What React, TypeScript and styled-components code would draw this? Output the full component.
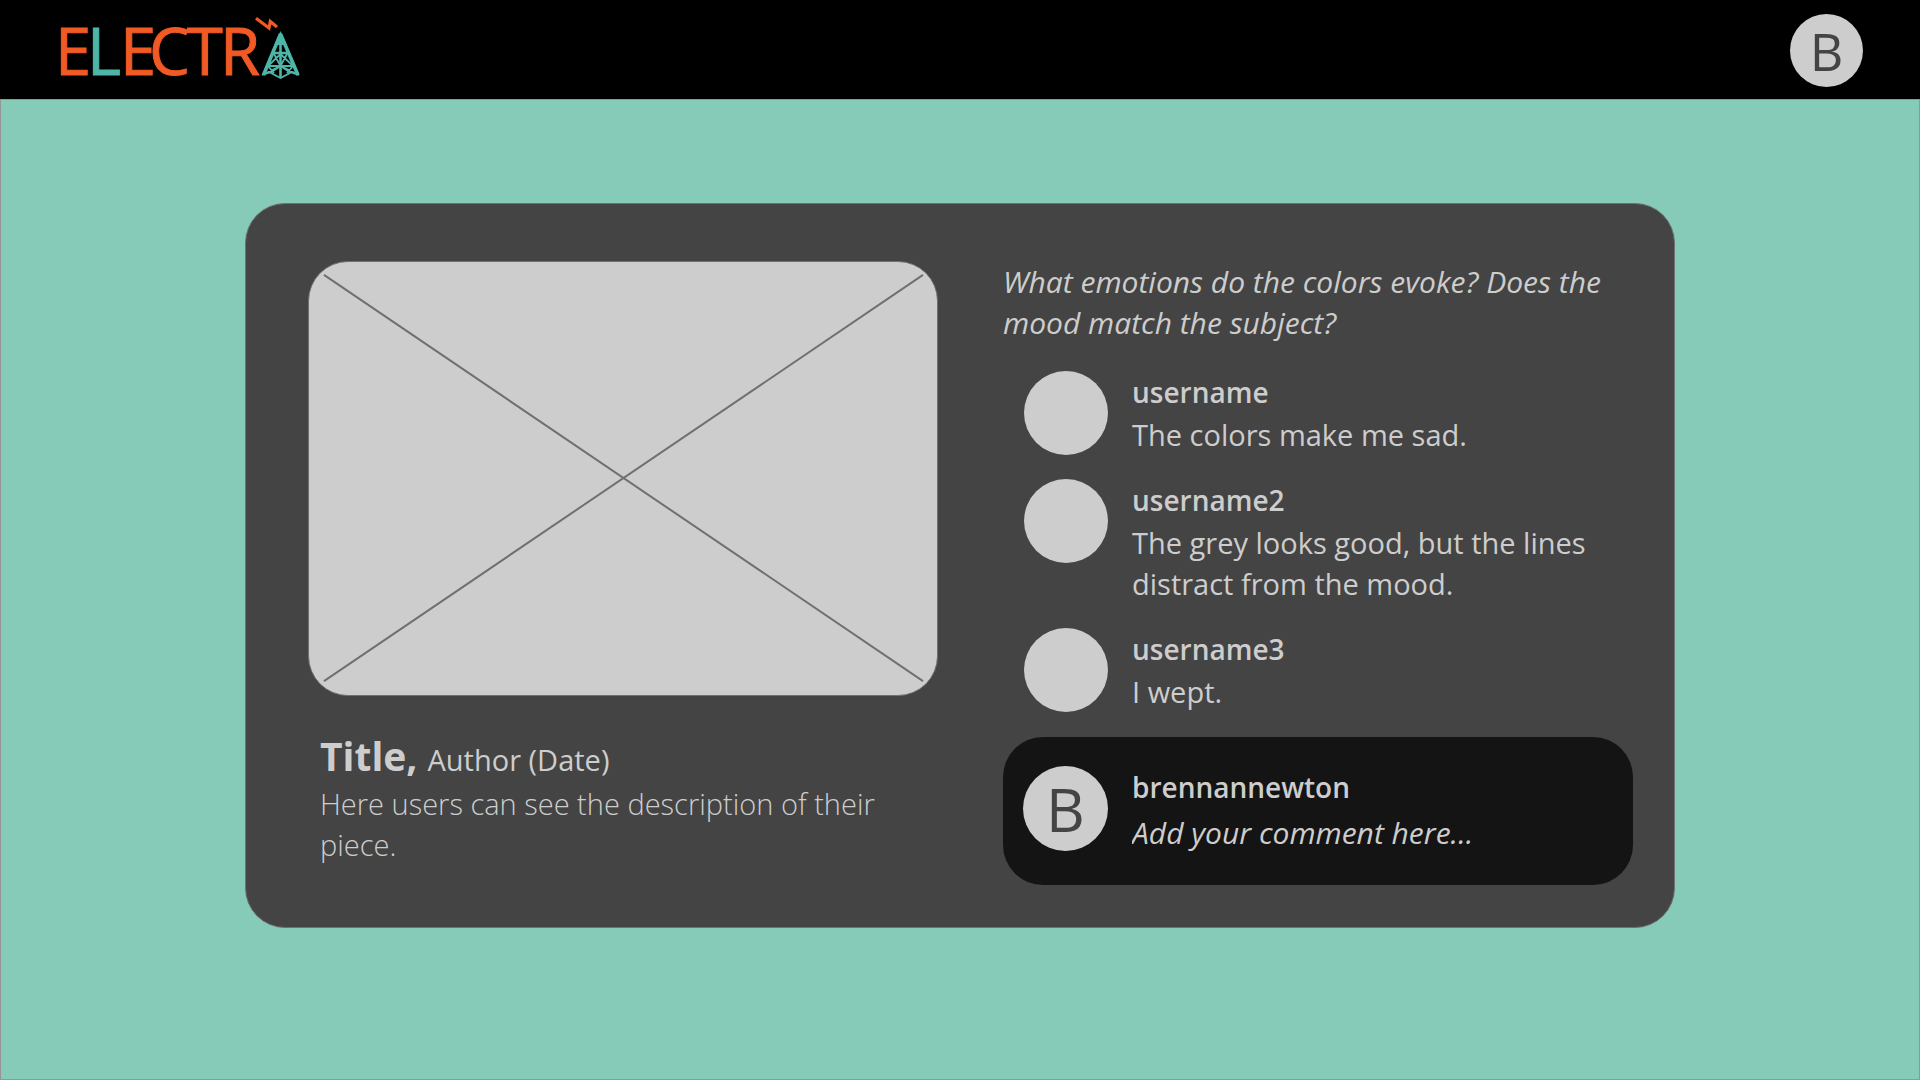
import React from "react";
import styled, { createGlobalStyle } from "styled-components";

const color = {
  mint: "#86cbb8",
  panel: "#444444",
  light: "#cdcdcd",
  line: "#707070",
  ink: "#141414",
  orange: "#f15a24",
  teal: "#4db6a8",
};

const GlobalStyle = createGlobalStyle`
  *, *::before, *::after { box-sizing: border-box; }
  body {
    margin: 0;
    background: ${color.mint};
    color: ${color.light};
    font-family: "Open Sans", "Noto Sans", sans-serif;
    font-size: 29px;
    line-height: 41px;
  }
  h1, h2, p, ul { margin: 0; padding: 0; }
`;

const Page = styled.div`
  min-height: 100vh;
  display: flex;
  flex-direction: column;
`;

const Header = styled.header`
  height: 99px;
  flex: none;
  display: flex;
  align-items: center;
  justify-content: space-between;
  padding: 2px 57px 0 48px;
  background: #000;
`;

const HomeLink = styled.a`
  display: block;
  svg { display: block; overflow: visible; }
`;

const LogoText = styled.text`
  font-family: "Open Sans", "Noto Sans", sans-serif;
  font-size: 65px;
  fill: ${color.orange};
  stroke: ${color.orange};
  stroke-width: 1px;
`;

const LogoAccent = styled.tspan`
  fill: ${color.teal};
  stroke: ${color.teal};
`;

const Avatar = styled.span<{ $size: number; $font?: number }>`
  flex: none;
  display: flex;
  align-items: center;
  justify-content: center;
  width: ${(p) => p.$size}px;
  height: ${(p) => p.$size}px;
  border-radius: 50%;
  background: ${color.light};
  color: ${color.panel};
  font-size: ${(p) => p.$font ?? 52}px;
  line-height: 1;
`;

const AccountButton = styled.button`
  padding: 0;
  border: 0;
  border-radius: 50%;
  background: none;
  font: inherit;
  cursor: pointer;
`;

const Main = styled.main`
  flex: 1;
  padding: 103px 244px;
  border: 1px solid #959595;
`;

const Card = styled.article`
  display: grid;
  grid-template-columns: minmax(0, 1fr) minmax(0, 1fr);
  column-gap: 65px;
  padding: 57px 41px 42px 62px;
  border: 1px solid ${color.line};
  border-radius: 40px;
  background: ${color.panel};
`;

const Artwork = styled.div`
  aspect-ratio: 630 / 435;
  overflow: hidden;
  border: 1px solid ${color.line};
  border-radius: 40px;
  background: ${color.light};
  svg { display: block; width: 100%; height: 100%; }
`;

const Caption = styled.div`
  padding: 37px 12px 0;
`;

const Heading = styled.div`
  display: flex;
  align-items: baseline;
  gap: 10px;
  line-height: 46px;
`;

const Title = styled.h1`
  font-size: 39px;
  font-weight: 700;
`;

const Description = styled.p`
  font-weight: 300;
`;

const Question = styled.h2`
  font-size: 30px;
  font-weight: 400;
  font-style: italic;
`;

const Comments = styled.ul`
  display: flex;
  flex-direction: column;
  gap: 24px;
  margin: 28px 0 25px;
  list-style: none;
`;

const Comment = styled.li`
  display: flex;
  gap: 24px;
  padding: 0 21px;
`;

const UserName = styled.div`
  font-size: 28px;
  font-weight: 600;
  line-height: 43px;
`;

const Composer = styled.form`
  display: flex;
  gap: 24px;
  height: 148px;
  padding: 29px 20px 0;
  border-radius: 40px;
  background: ${color.ink};
`;

const Field = styled.div`
  flex: 1;
  min-width: 0;
`;

const CommentInput = styled.input`
  display: block;
  width: 100%;
  height: 46px;
  padding: 0;
  border: 0;
  outline: 0;
  background: none;
  color: ${color.light};
  font: inherit;
  font-size: 30px;
  font-style: italic;
  &::placeholder { color: inherit; opacity: 1; }
`;

const comments = [
  { user: "username", text: "The colors make me sad." },
  { user: "username2", text: "The grey looks good, but the lines distract from the mood." },
  { user: "username3", text: "I wept." },
];

function Logo() {
  return (
    <svg width="256" height="96" viewBox="48 3 256 96" role="img" aria-label="Electra">
      <LogoText x="55 87 120 149 187 220" y="75">
        E<LogoAccent>L</LogoAccent>ECTR
      </LogoText>
      <path d="M256 18.300L269 28L270.300 21.500L277 27" fill="none" stroke={color.orange} strokeWidth="3.200" />
      <path d="M280.500 31L286.500 45H274.500Z" fill={color.teal} />
      <g fill="none" stroke={color.teal}>
        <path d="M280.500 34L263.500 75M280.500 34L298 75" strokeWidth="3.600" />
        <path d="M280.500 40V78M273 53H288" strokeWidth="2.600" />
        <path
          d="M268 66H293M274 54L280.500 66L262 75M287 54L280.500 66L299 75M280.500 54L268 66L274 73M280.500 54L293 66L287 73M262 75L270 72.500L280.500 78L291 72.500L299 75M280.500 66L270 73M280.500 66L291 73"
          strokeWidth="1.800"
        />
      </g>
    </svg>
  );
}

export default function App() {
  return (
    <Page>
      <GlobalStyle />
      <Header>
        <HomeLink href="#" aria-label="Electra">
          <Logo />
        </HomeLink>
        <AccountButton type="button" aria-label="Account">
          <Avatar $size={73}>B</Avatar>
        </AccountButton>
      </Header>
      <Main>
        <Card>
          <section>
            <Artwork>
              <svg viewBox="0 0 629 435" preserveAspectRatio="none" aria-hidden="true">
                <path d="M15 13L615 421M615 13L15 421" stroke={color.line} strokeWidth="2" />
              </svg>
            </Artwork>
            <Caption>
              <Heading>
                <Title>Title,</Title>
                <span>Author (Date)</span>
              </Heading>
              <Description>Here users can see the description of their piece.</Description>
            </Caption>
          </section>
          <section>
            <Question>What emotions do the colors evoke? Does the mood match the subject?</Question>
            <Comments>
              {comments.map((c) => (
                <Comment key={c.user}>
                  <Avatar $size={84} />
                  <div>
                    <UserName>{c.user}</UserName>
                    <p>{c.text}</p>
                  </div>
                </Comment>
              ))}
            </Comments>
            <Composer onSubmit={(e) => e.preventDefault()}>
              <Avatar $size={85} $font={60}>B</Avatar>
              <Field>
                <UserName as="label" htmlFor="comment">brennannewton</UserName>
                <CommentInput id="comment" type="text" placeholder="Add your comment here..." />
              </Field>
            </Composer>
          </section>
        </Card>
      </Main>
    </Page>
  );
}
